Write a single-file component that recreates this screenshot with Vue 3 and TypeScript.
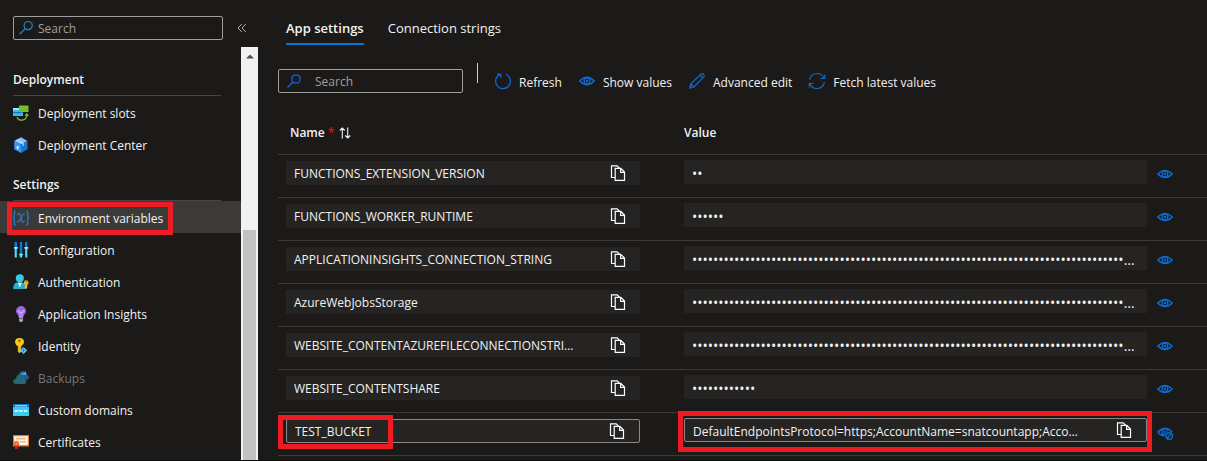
<script setup lang="ts">
import { ref } from 'vue'

interface NavItem {
  label: string
  icon: string
  selected?: boolean
  disabled?: boolean
}

interface NavGroup {
  title: string
  items: NavItem[]
}

interface Setting {
  name: string
  value: string
  revealed?: boolean
}

const groups: NavGroup[] = [
  {
    title: 'Deployment',
    items: [
      { label: 'Deployment slots', icon: 'slots' },
      { label: 'Deployment Center', icon: 'center' },
    ],
  },
  {
    title: 'Settings',
    items: [
      { label: 'Environment variables', icon: 'variables', selected: true },
      { label: 'Configuration', icon: 'configuration' },
      { label: 'Authentication', icon: 'authentication' },
      { label: 'Application Insights', icon: 'insights' },
      { label: 'Identity', icon: 'identity' },
      { label: 'Backups', icon: 'backups', disabled: true },
      { label: 'Custom domains', icon: 'domains' },
      { label: 'Certificates', icon: 'certificates' },
    ],
  },
]

const mask = (count: number): string => '•'.repeat(count)

const settings: Setting[] = [
  { name: 'FUNCTIONS_EXTENSION_VERSION', value: mask(2) },
  { name: 'FUNCTIONS_WORKER_RUNTIME', value: mask(6) },
  { name: 'APPLICATIONINSIGHTS_CONNECTION_STRING', value: mask(120) },
  { name: 'AzureWebJobsStorage', value: mask(120) },
  { name: 'WEBSITE_CONTENTAZUREFILECONNECTIONSTRING', value: mask(120) },
  { name: 'WEBSITE_CONTENTSHARE', value: mask(12) },
  {
    name: 'TEST_BUCKET',
    value: 'DefaultEndpointsProtocol=https;AccountName=snatcountapp;AccountKey=',
    revealed: true,
  },
]

const commands = [
  { label: 'Refresh', icon: 'refresh' },
  { label: 'Show values', icon: 'eye' },
  { label: 'Advanced edit', icon: 'pencil' },
  { label: 'Fetch latest values', icon: 'fetch' },
]

const menuQuery = ref('')
const settingQuery = ref('')
</script>

<template>
  <div class="app">
    <aside class="sidebar">
      <div class="sidebar-top">
        <label class="search menu-search">
          <svg class="icon" viewBox="0 0 16 16" fill="none" stroke="#1a86d9" stroke-width="1.2">
            <circle cx="10.2" cy="5.6" r="4.1" />
            <path d="M7.2 8.7 1.6 14.2" />
          </svg>
          <input v-model="menuQuery" type="text" placeholder="Search" aria-label="Search menu" />
        </label>
        <button class="collapse" type="button" aria-label="Collapse menu">
          <svg viewBox="0 0 10 10" fill="none" stroke="#b5b3b0" stroke-width="1">
            <path d="M4.8 1 1 5l3.8 4M8.8 1 5 5l3.8 4" />
          </svg>
        </button>
      </div>

      <div class="sidebar-body">
        <nav class="menu">
          <section v-for="group in groups" :key="group.title" class="group">
            <h2>{{ group.title }}</h2>
            <a
              v-for="item in group.items"
              :key="item.label"
              href="#"
              class="item"
              :class="{ selected: item.selected, disabled: item.disabled }"
            >
              <svg v-if="item.icon === 'slots'" class="icon" viewBox="0 0 16 16">
                <path d="M0 3h6v3.500h4V11H0z" fill="#32bfe8" />
                <path d="M0 3h6v2H0z" fill="#9cebff" />
                <path d="M0 7h9.500v1.200H0z" fill="#1477bb" />
                <path d="M6 .5h9.500V7H6z" fill="#76bc2d" />
                <path d="M4 12.200c1 2.500 3.500 3.200 5.700 2.800 2.500-.4 4-2.300 4-5" fill="none" stroke="#76bc2d" stroke-width="1.300" />
                <path d="M13.800 7.700 16 11h-4.400z" fill="#76bc2d" />
              </svg>
              <svg v-else-if="item.icon === 'center'" class="icon" viewBox="0 0 16 16">
                <path d="M8 .3 14.500 4 8 7.500 1.200 4z" fill="#83c2fa" />
                <path d="M1.200 4 8 7.500V16l-6.800-3.800z" fill="#3699f0" />
                <path d="M14.500 4 8 7.500V16l6.500-3.800z" fill="#1478d6" />
                <path d="m4.300 2.300 6.800 3.700v2.400l-1.600.9V7L2.800 3.200z" fill="#c7e4fc" opacity=".7" />
                <path d="M3.700 9.300 5.500 8.800v3.700l-1.800-.8z" fill="#e9f6ff" />
              </svg>
              <svg v-else-if="item.icon === 'variables'" class="icon" viewBox="0 0 16 16" fill="none">
                <path d="M3 1H2.300Q1.300 1 1.300 2.500v3.800L.5 8l.8 1.500v4Q1.300 15 2.300 15H3M13 1h.7q1 0 1 1.500v3.800l.8 1.700-.8 1.500v4q0 1.500-1 1.500H13" stroke="#1688d8" stroke-width="1.200" />
                <path d="M4.300 5.200C6.700 1.500 7.300 4 8 7.500s1.400 6.300 3.700 3M11.800 4.200C9.800 3.300 8.500 6.800 8 8s-2 4.800-4 3.500" stroke="#2d76bf" stroke-width="1.300" />
              </svg>
              <svg v-else-if="item.icon === 'configuration'" class="icon" viewBox="0 0 16 16">
                <path d="M1.500 0H4v6H1.500zM6.800 0h2.400v12H6.800zM12 0h2.400v6H12z" fill="#0f78d4" />
                <path d="M1.700 6h2.100v9.500H1.700zM6.900 12h2.200v3.500H6.900zM12.200 6h2.100v9.500h-2.100z" fill="#50e0fa" />
                <path d="M1 5h3.800v1.800H1zM6.200 11.800h3.600v1.500H6.200zM11.400 5h3.800v1.800h-3.800z" fill="#8befff" />
              </svg>
              <svg v-else-if="item.icon === 'authentication'" class="icon" viewBox="0 0 16 16">
                <path d="M0 15q.4-6.200 4-6.500h5.300q3.300.4 3.600 6.500Z" fill="#28afd2" />
                <circle cx="6.800" cy="4.200" r="4" fill="#38cbe9" />
                <path d="m4.700 8.200 2 5.300 2.200-5.300q-2 1-4.200 0" fill="#dbf9ff" />
                <path d="M13.200 6.200a2.500 2.500 0 0 1 1 4.700V14l-1 1-1.300-1v-3.200a2.500 2.500 0 0 1 1.300-4.600" fill="#fbb914" />
                <circle cx="13.200" cy="7.700" r=".7" fill="#8d5b00" />
              </svg>
              <svg v-else-if="item.icon === 'insights'" class="icon" viewBox="0 0 16 16">
                <path d="M8 0a5 5 0 0 1 5 5c0 3-2.600 3.400-2.800 7H5.900C5.700 8.400 3 8 3 5a5 5 0 0 1 5-5" fill="#9a64e8" />
                <path d="M7 12V6.500L5.300 6q-.7-1.300.4-1.800C7 4 7 5.500 7 6.500h2c0-1 .1-2.500 1.300-2.300 1.200.5.500 1.800.5 1.800L9 6.500V12" fill="none" stroke="#d9b9ff" stroke-width=".8" />
                <path d="M6 12.600h4v2L9 16H7l-1-1.400z" fill="#a6a6a6" />
              </svg>
              <svg v-else-if="item.icon === 'identity'" class="icon" viewBox="0 0 16 16">
                <path d="M6.500 0q4.300.2 4.500 4-.1 2.800-2.600 4v1.300l-.9 1 .9 1-.9 1 .9 1-1.900 2-1.700-2V8Q2.300 7 2 4 2.200.2 6.500 0" fill="#ffc91c" />
                <circle cx="6.500" cy="2.800" r="1.200" fill="#87600d" />
                <path d="M5.800 8v5" stroke="#e18b00" stroke-width=".8" />
                <path d="m10.500 9 3.700 3.500-3.700 3.500L7 12.500z" fill="#75c4e8" />
                <path d="M10.500 10.500v3.800M8.700 12.500h3.700" stroke="#2886bd" />
              </svg>
              <svg v-else-if="item.icon === 'backups'" class="icon" viewBox="0 0 16 16">
                <path d="M5.500 6Q6 1.400 10 1q3.700 0 4.100 3.700 2 .7 1.800 3-.4 2-2.500 2H7z" fill="#245c9a" />
                <path d="M0 11.800Q.2 9 3 8.800 3.300 4.700 7 4.600q3.300.2 3.800 4 2.400.2 2.500 2.800-.2 2.500-3 2.600H2.500Q.2 13.900 0 11.800" fill="#236779" />
                <path d="M8 4.500Q10 2 12.300 4M12.500 1.800v2.500H10" fill="none" stroke="#8da2b5" />
              </svg>
              <svg v-else-if="item.icon === 'domains'" class="icon" viewBox="0 0 16 16">
                <path d="M0 2h16v4H0z" fill="#0876cf" />
                <path d="M0 5h16v9H0z" fill="#35cef2" />
                <path d="M2 3.300h12v1H2z" fill="#d8f5ff" />
                <path d="m1.800 8 .8 2 .8-2 .8 2L5 8m1.300 0 .8 2 .8-2 .8 2 .8-2M11 8l.8 2 .8-2 .8 2 .8-2" fill="none" stroke="#fff" stroke-width=".8" />
              </svg>
              <svg v-else class="icon" viewBox="0 0 16 16">
                <path d="M0 1h16v11.500H0z" fill="#dc7b25" />
                <path d="M1.200 2.200h13.600v8.900H1.200z" fill="#fff6e9" />
                <path d="M3 3.800h10v1.700H3zM7 7h6v1.500H7z" fill="#eeb77e" />
                <path d="m1.500 10 .7 5.500 1.300-.8 1.400.8.7-5.500z" fill="#c91f24" />
                <circle cx="3.500" cy="9.300" r="2.600" fill="#f06c2c" />
                <circle cx="3.500" cy="9.300" r="1" fill="#ff9b41" />
              </svg>
              <span>{{ item.label }}</span>
              <i v-if="item.selected" class="marker menu-marker"></i>
            </a>
          </section>
        </nav>
        <div class="scrollbar">
          <svg viewBox="0 0 8 5"><path d="M0 4.500 4 .5l4 4z" fill="#505050" /></svg>
          <div class="thumb"></div>
        </div>
      </div>
    </aside>

    <main class="content">
      <div class="tabs" role="tablist">
        <button type="button" role="tab" class="tab active" aria-selected="true">App settings</button>
        <button type="button" role="tab" class="tab" aria-selected="false">Connection strings</button>
      </div>

      <div class="toolbar">
        <label class="search setting-search">
          <svg class="icon" viewBox="0 0 16 16" fill="none" stroke="#1565d8" stroke-width="1.3">
            <circle cx="10" cy="6" r="4.200" />
            <path d="M7 9 1.500 14.500" />
          </svg>
          <input v-model="settingQuery" type="text" placeholder="Search" aria-label="Search settings" />
        </label>
        <span class="divider"></span>
        <div class="commands">
          <button v-for="command in commands" :key="command.label" type="button" class="command">
            <svg v-if="command.icon === 'refresh'" class="icon" viewBox="0 0 16 16" fill="none" stroke="#1269d3" stroke-width="1.2">
              <path d="M10.800 1.300A7.400 7.400 0 1 1 5 1.400M2 1h3.800v3.800" />
            </svg>
            <svg v-else-if="command.icon === 'eye'" class="icon" viewBox="0 0 16 16" fill="none" stroke="#1269d3" stroke-width="1.3">
              <path d="M.8 8Q8 .5 15.200 8 8 15.500.8 8Z" />
              <circle cx="8" cy="8" r="2.900" />
              <circle cx="8" cy="8" r=".6" />
            </svg>
            <svg v-else-if="command.icon === 'pencil'" class="icon" viewBox="0 0 16 16" fill="none" stroke="#1269d3" stroke-width="1.200">
              <path d="m.8 15.200 1-4.400L12.200 1Q13.300.1 14.500 1.200q1.300 1.300.4 2.500L5 14zM11 2.200l2.800 2.900M1.800 10.800 5 14" />
            </svg>
            <svg v-else class="icon" viewBox="0 0 16 16" fill="none" stroke="#1269d3" stroke-width="1.100">
              <path d="M.6 6.800A7.500 7.500 0 0 1 15 5.300M15.700 1.500v4h-4M15.400 9.200A7.500 7.500 0 0 1 1 10.700M.3 14.500v-4h4" />
            </svg>
            <span>{{ command.label }}</span>
          </button>
        </div>
      </div>

      <table class="settings">
        <colgroup>
          <col class="name-col" />
          <col />
          <col class="action-col" />
        </colgroup>
        <thead>
          <tr>
            <th scope="col" class="name-head">
              Name<span class="required">*</span>
              <svg class="sort" viewBox="0 0 12 12" fill="none" stroke="#f3f2f1" stroke-width="1.100">
                <path d="M3.300 11.500V1M.8 3.500 3.300 1l2.500 2.500M8.700.5V11M6.200 8.500 8.700 11l2.500-2.500" />
              </svg>
            </th>
            <th scope="col">Value</th>
            <td></td>
          </tr>
        </thead>
        <tbody>
          <tr v-for="setting in settings" :key="setting.name">
            <td class="name-cell">
              <div class="field" :class="{ editable: setting.revealed }">
                <input type="text" readonly :value="setting.name" aria-label="Name" />
                <button type="button" class="copy" aria-label="Copy name">
                  <svg class="icon" viewBox="0 0 16 16" fill="none" stroke="#fff" stroke-width="1.200">
                    <path d="M5 12.500H1.500V.8h5.700l2.300 2.400M5.200 3.400h5.600l3.700 3.700v8.300H5.200zM10.600 3.400v3.900h3.900" />
                  </svg>
                </button>
                <i v-if="setting.revealed" class="marker name-marker"></i>
              </div>
            </td>
            <td class="value-cell">
              <div class="field" :class="setting.revealed ? 'editable' : 'masked'">
                <input type="text" readonly :value="setting.value" aria-label="Value" />
                <button v-if="setting.revealed" type="button" class="copy" aria-label="Copy value">
                  <svg class="icon" viewBox="0 0 16 16" fill="none" stroke="#fff" stroke-width="1.200">
                    <path d="M5 12.500H1.500V.8h5.700l2.300 2.400M5.200 3.400h5.600l3.700 3.700v8.300H5.200zM10.600 3.400v3.900h3.900" />
                  </svg>
                </button>
                <i v-if="setting.revealed" class="marker value-marker"></i>
              </div>
            </td>
            <td class="action-cell">
              <button type="button" class="reveal" :aria-label="setting.revealed ? 'Hide value' : 'Show value'">
                <svg class="icon" viewBox="0 0 16 16" fill="none" stroke="#0b6bd0" stroke-width="1.400">
                  <template v-if="setting.revealed">
                    <path d="M7.500 11.800Q3.500 11.500.8 8 8 .5 15.200 8M8.500 10.700A2.900 2.900 0 1 1 10.800 7.300" />
                    <circle cx="8" cy="8" r=".6" />
                    <circle cx="12.200" cy="12" r="3.200" />
                    <path d="m14.400 9.800-4.500 4.500" />
                  </template>
                  <template v-else>
                    <path d="M.8 8Q8 .8 15.200 8 8 15.200.8 8Z" />
                    <circle cx="8" cy="8" r="2.900" />
                    <circle cx="8" cy="8" r=".6" />
                  </template>
                </svg>
              </button>
            </td>
          </tr>
        </tbody>
      </table>
    </main>
  </div>
</template>

<style>
body {
  background: #1b1a19;
}
</style>

<style scoped>
.app {
  box-sizing: border-box;
  display: flex;
  min-height: 100vh;
  border-bottom: 1px solid #0d0c0c;
  background: #1b1a19;
  color: #f3f2f1;
  font-family: "Open Sans", "Noto Sans", sans-serif;
  font-size: 12px;
  line-height: 16px;
}

button,
input {
  margin: 0;
  padding: 0;
  border: 0;
  outline: 0;
  background: none;
  color: inherit;
  font: inherit;
}

button {
  cursor: pointer;
}

input {
  flex: 1;
  min-width: 0;
  padding-top: 2px;
  text-overflow: ellipsis;
}

input::placeholder {
  color: #a19f9d;
  opacity: 1;
}

.icon {
  display: block;
  flex: none;
  width: 16px;
  height: 16px;
  overflow: visible;
}

.sidebar {
  display: flex;
  flex: none;
  flex-direction: column;
  width: 258px;
}

.sidebar-top {
  display: flex;
  align-items: center;
  gap: 14px;
  padding: 16px 10px 7px 13px;
}

.search {
  box-sizing: border-box;
  display: flex;
  align-items: center;
  height: 24px;
  border: 1px solid #a19f9d;
  border-radius: 2px;
}

.menu-search {
  width: 210px;
  padding: 0 4px;
  gap: 4px;
}

.collapse svg {
  display: block;
  width: 10px;
  height: 10px;
}

.sidebar-body {
  display: flex;
  flex: 1;
}

.menu {
  flex: 1;
  padding-top: 17px;
}

.group + .group {
  margin-top: 9px;
}

h2 {
  box-sizing: border-box;
  height: 32px;
  margin: 0 20px 0 13px;
  padding-top: 8px;
  border-bottom: 1px solid #484644;
  font-size: 12px;
  font-weight: 600;
  line-height: 16px;
}

.item {
  position: relative;
  box-sizing: border-box;
  display: flex;
  align-items: center;
  gap: 9px;
  height: 32px;
  padding: 2px 0 0 13px;
  color: inherit;
  text-decoration: none;
}

.item span {
  padding-top: 2px;
}

.item.selected {
  background: #3b3a39;
}

.item.disabled {
  color: #797775;
}

.scrollbar {
  display: flex;
  flex-direction: column;
  align-items: center;
  width: 17px;
  padding-top: 7px;
  box-sizing: border-box;
  background: #f1f1f1;
}

.scrollbar svg {
  width: 8px;
  height: 5px;
}

.thumb {
  flex: 1;
  width: 13px;
  margin-top: 171px;
  background: #c1c1c1;
}

.marker {
  position: absolute;
  box-sizing: border-box;
  border: 5px solid #ed1c24;
  pointer-events: none;
}

.menu-marker {
  top: 1px;
  left: 7px;
  width: 166px;
  height: 33px;
}

.name-marker {
  top: -5px;
  left: -9px;
  width: 115px;
  height: 34px;
}

.value-marker {
  inset: -8px -6px -11px -7px;
}

.content {
  flex: 1;
  min-width: 0;
  padding-left: 20px;
}

.tabs {
  display: flex;
  gap: 24px;
  padding: 16px 0 0 8px;
}

.tab {
  height: 29px;
  padding-bottom: 3px;
  border-bottom: 2px solid transparent;
  font-size: 13px;
}

.tab.active {
  border-color: #0078d4;
  font-weight: 600;
}

.toolbar {
  display: flex;
  align-items: center;
  padding-top: 24px;
}

.setting-search {
  width: 185px;
  padding: 0 7px;
  gap: 13px;
}

.divider {
  align-self: flex-start;
  width: 1px;
  height: 20px;
  margin: -6px 17px 0 14px;
  background: #d2d0ce;
}

.commands {
  display: flex;
  gap: 17px;
}

.command {
  display: flex;
  align-items: center;
  gap: 8px;
  white-space: nowrap;
}

.command span {
  padding-top: 3px;
}

.settings {
  width: 100%;
  margin-top: 18px;
  border-collapse: separate;
  border-spacing: 0;
  table-layout: fixed;
}

.name-col {
  width: 398px;
}

.action-col {
  width: 60px;
}

.settings td,
.settings th {
  box-sizing: border-box;
  height: 43px;
  padding: 0;
  border-bottom: 1px solid #3b3a39;
  text-align: left;
  vertical-align: top;
}

.settings thead th,
.settings thead td {
  height: 44px;
}

.settings th {
  padding: 14px 8px 0;
  font-weight: 600;
}

.settings .name-head {
  padding-left: 12px;
}

.required {
  margin: 0 5px 0 3px;
  color: #f00;
}

.sort {
  width: 12px;
  height: 12px;
  vertical-align: -2px;
}

.settings .name-cell {
  padding: 6px 36px 0 8px;
}

.settings .value-cell {
  padding: 5px 0 0 8px;
}

.value-cell input {
  padding-top: 4px;
}

.settings .action-cell {
  padding: 11px 0 0 10px;
}

.field {
  position: relative;
  box-sizing: border-box;
  display: flex;
  align-items: center;
  gap: 34px;
  height: 24px;
  padding: 0 14px 0 8px;
  background: #252423;
}

.field.editable {
  border: 1px solid #8a8886;
  border-radius: 2px;
}

.field.masked {
  padding-right: 12px;
  font-size: 14px;
}

.copy,
.reveal {
  display: block;
  flex: none;
}
</style>
